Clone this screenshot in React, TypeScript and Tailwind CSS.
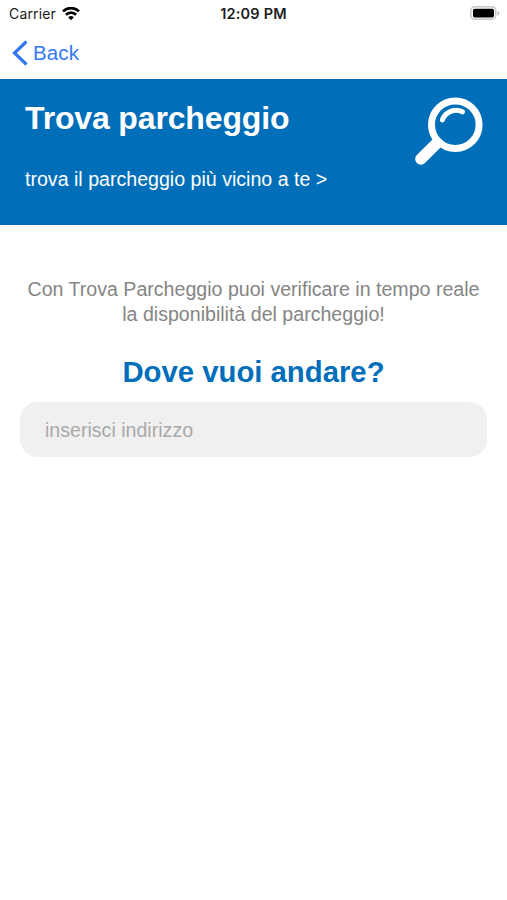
import React, { useState } from 'react';

const StatusBar: React.FC = () => (
    <div className="relative flex h-[27px] items-center justify-between pl-[9px] pr-[7px] font-['Inter','Liberation_Sans',sans-serif] text-[#1c1c1c]">
        <div className="flex items-center gap-[6px]">
            <span className="text-[14px] leading-[27px] tracking-[0.15px]">Carrier</span>
            <svg width="18" height="14" viewBox="0 0 18 14" fill="none" stroke="#000" strokeWidth="2.7">
                <path d="M1 4.4a11.3 11.3 0 0 1 16 0" />
                <path d="M3.9 7.8a7.2 7.2 0 0 1 10.2 0" />
                <path d="M9 13.2 6.2 10.3a4 4 0 0 1 5.6 0Z" fill="#000" stroke="none" />
            </svg>
        </div>
        <span className="absolute inset-x-0 text-center text-[14.5px] leading-[27px] font-semibold tracking-[0.2px]">12:09 PM</span>
        <svg width="30" height="14" viewBox="0 0 30 14" className="relative -top-px">
            <rect x="0.8" y="0.8" width="25" height="12.4" rx="3.8" fill="#fff" stroke="#c6c6c6" strokeWidth="1.5" />
            <rect x="3" y="2.8" width="21" height="8.6" rx="1.6" fill="#000" />
            <path d="M27.6 5v4.4c1.1-.4 1.8-1.2 1.8-2.2s-.7-1.8-1.8-2.2Z" fill="#b5b5b5" />
        </svg>
    </div>
);

const SearchIcon: React.FC = () => (
    <svg width="70" height="70" viewBox="0 0 70 70" fill="none" stroke="#fff" strokeLinecap="round">
        <circle cx="41.3" cy="28.7" r="23.8" strokeWidth="7" />
        <path d="M23 47 6.9 63" strokeWidth="11.5" />
        <path d="M28.4 23.8a14.6 14.6 0 0 1 20-8" strokeWidth="5" />
    </svg>
);

export default function App() {
    const [address, setAddress] = useState('');

    return (
        <div className="min-h-screen bg-white font-['Liberation_Sans',Arial,sans-serif]">
            <StatusBar />

            <nav className="flex h-[52px] items-center pl-[12px]">
                <button className="flex items-center gap-[5px] text-[#3478f6]">
                    <svg width="16" height="26" viewBox="0 0 16 26" fill="none" stroke="currentColor" strokeWidth="3.2">
                        <path d="M14.5 1.5 2.5 13l12 11.5" />
                    </svg>
                    <span className="text-[20.5px] leading-[26px] tracking-[0.15px]">Back</span>
                </button>
            </nav>

            <header className="flex h-[146px] justify-between bg-[#006eb9] pl-[25px] pr-[23px] pt-[17px] text-white">
                <div>
                    <h1 className="pt-px text-[32px] leading-[42px] font-bold tracking-[-0.15px] whitespace-nowrap">Trova parcheggio</h1>
                    <p className="mt-[27px] text-[19.6px] leading-[26px] whitespace-nowrap">trova il parcheggio più vicino a te &gt;</p>
                </div>
                <SearchIcon />
            </header>

            <main className="px-[20px] pt-[52px]">
                <p className="text-center text-[19.6px] leading-[25px] whitespace-nowrap text-[#858585]">
                    Con Trova Parcheggio puoi verificare in tempo reale
                    <br />
                    la disponibilità del parcheggio!
                </p>
                <h2 className="mt-[25px] text-center text-[29.3px] leading-[40px] font-bold text-[#006eb9]">Dove vuoi andare?</h2>
                <input
                    className="mt-[10px] block h-[55px] w-full rounded-[18px] bg-[#f0f0f0] px-[25px] pt-[2px] text-[19.6px] text-[#333] outline-none placeholder:text-[#a9a9a9]"
                    placeholder="inserisci indirizzo"
                    value={address}
                    onChange={(e) => setAddress(e.target.value)}
                />
            </main>
        </div>
    );
}
